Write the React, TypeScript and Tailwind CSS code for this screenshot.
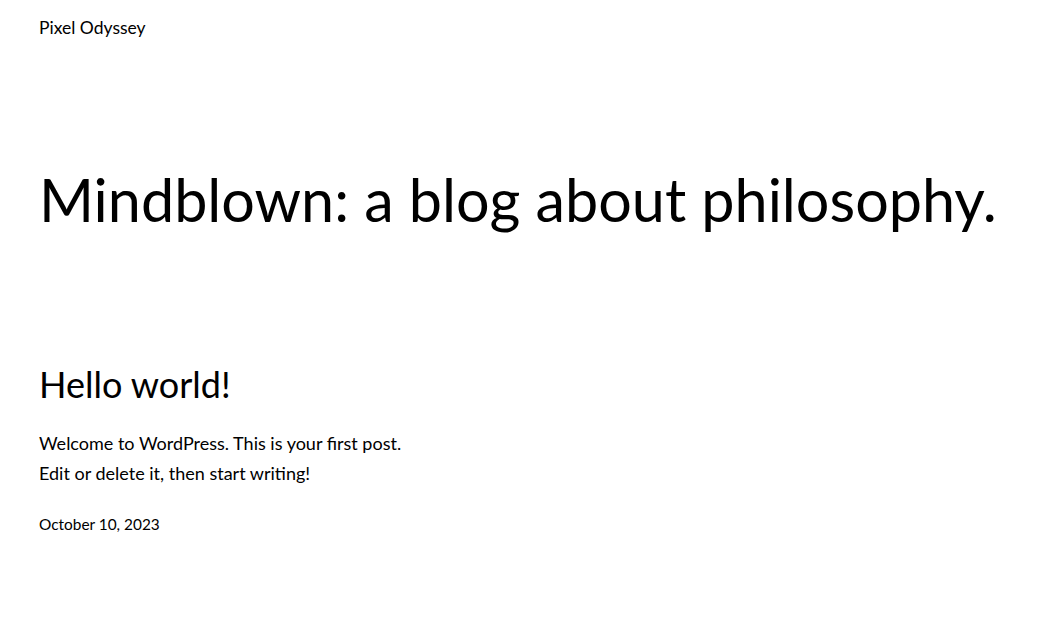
import React from 'react';

const App: React.FC = () => {
  return (
    <div className="min-h-screen bg-white text-black font-['Lato',sans-serif] px-[39px]">
      {/* Site header */}
      <header className="pt-[14px]">
        <p className="text-[17.5px] leading-[28px]">Pixel Odyssey</p>
      </header>

      {/* Hero */}
      <section className="pt-[119px]">
        <h1 className="text-[59.3px] leading-[77px] font-normal whitespace-nowrap">
          Mindblown: a blog about philosophy.
        </h1>
      </section>

      {/* Posts */}
      <main className="pt-[123px]">
        <article>
          <h2 className="text-[36px] leading-[46px] font-normal">Hello world!</h2>
          <div className="pt-[21px] text-[18px] leading-[30px]">
            <p>Welcome to WordPress. This is your first post.</p>
            <p>Edit or delete it, then start writing!</p>
          </div>
          <p className="pt-[26px] text-[15.4px] leading-[20px]">October 10, 2023</p>
        </article>
      </main>
    </div>
  );
};

export default App;
